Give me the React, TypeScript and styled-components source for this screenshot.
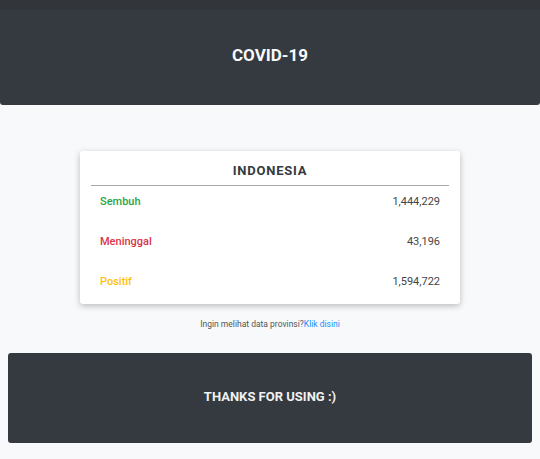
import React from "react";
import styled, { createGlobalStyle } from "styled-components";

const Global = createGlobalStyle`
  html, body { margin: 0; padding: 0; background: #f8f9fa; }
  body { font-family: Roboto, "Liberation Sans", sans-serif; }
`;

const Page = styled.div`
  width: 540px;
  height: 459px;
  overflow: hidden;
  display: flex;
  flex-direction: column;
  background: #f8f9fa;
`;

const TopBand = styled.div`
  height: 10px;
  background: #323539;
`;

const Header = styled.header`
  height: 95px;
  background: #343a40;
  border-radius: 0 0 3px 3px;
  display: flex;
  align-items: center;
  justify-content: center;
  padding-bottom: 5px;
  box-sizing: border-box;
  color: #f8f9fa;
  font-size: 17px;
  font-weight: 700;
`;

const Main = styled.main`
  display: flex;
  flex-direction: column;
  align-items: center;
  padding-top: 46px;
`;

const Card = styled.section`
  width: 380px;
  background: #fff;
  border-radius: 3px;
  box-shadow: 0 2px 6px rgba(0, 0, 0, 0.25);
  padding: 11px 11px 8px;
  box-sizing: border-box;
  display: flex;
  flex-direction: column;
  gap: 10px;
`;

const Title = styled.h2`
  margin: 0;
  text-align: center;
  font-size: 13px;
  font-weight: 700;
  letter-spacing: 0.8px;
  color: #343a40;
  line-height: 17px;
  padding-bottom: 6px;
  border-bottom: 1px solid #a8a8a8;
  margin-bottom: -10px;
`;

const Row = styled.div`
  display: flex;
  justify-content: space-between;
  align-items: center;
  height: 30px;
  padding: 0 9px;
  font-size: 11px;
`;

const Label = styled.span<{ $color: string }>`
  color: ${(p) => p.$color};
  font-weight: 500;
`;

const Value = styled.span`
  color: #444;
`;

const Note = styled.p`
  margin: 15px 0 0;
  font-size: 8.5px;
  color: #555;
`;

const Link = styled.a`
  color: #1a8cff;
  text-decoration: none;
`;

const Footer = styled.footer`
  margin: 24px 8px 0;
  height: 90px;
  background: #343a40;
  border-radius: 3px;
  display: flex;
  align-items: center;
  justify-content: center;
  padding-bottom: 4px;
  box-sizing: border-box;
  color: #f1f1f1;
  font-size: 13px;
  font-weight: 700;
`;

const rows = [
  { label: "Sembuh", color: "#28a745", value: "1,444,229" },
  { label: "Meninggal", color: "#dc3545", value: "43,196" },
  { label: "Positif", color: "#ffc107", value: "1,594,722" },
];

export default function App() {
  return (
    <>
      <Global />
      <Page>
        <TopBand />
        <Header>COVID-19</Header>
        <Main>
          <Card>
            <Title>INDONESIA</Title>
            {rows.map((r) => (
              <Row key={r.label}>
                <Label $color={r.color}>{r.label}</Label>
                <Value>{r.value}</Value>
              </Row>
            ))}
          </Card>
          <Note>
            Ingin melihat data provinsi?<Link href="#">Klik disini</Link>
          </Note>
        </Main>
        <Footer>THANKS FOR USING :)</Footer>
      </Page>
    </>
  );
}
